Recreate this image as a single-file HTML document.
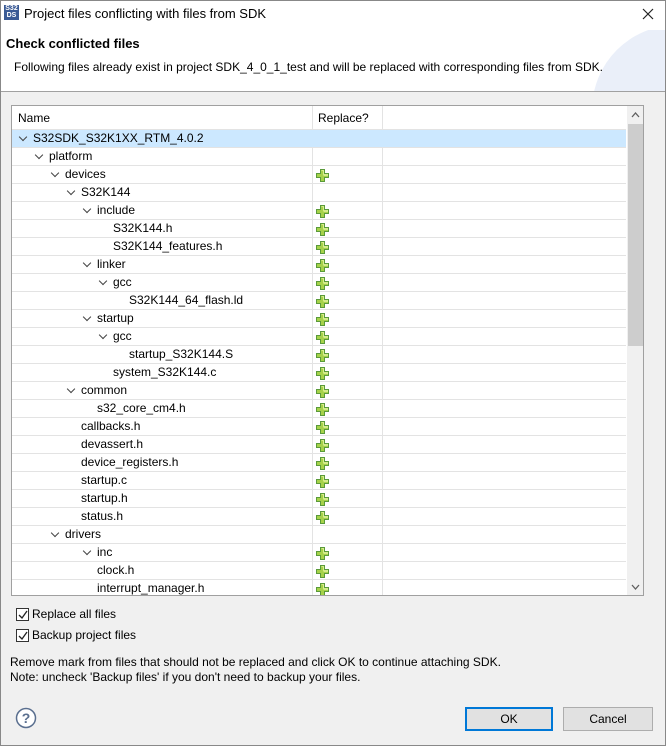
<!DOCTYPE html>
<html><head><style>
*{margin:0;padding:0;box-sizing:border-box}
body{width:666px;height:746px;background:#f0f0f0;font-family:"Liberation Sans",sans-serif;font-size:12px;color:#000;position:relative;overflow:hidden}
.abs{position:absolute}
#frame{left:0;top:0;width:666px;height:746px;border:1px solid #888;pointer-events:none;z-index:9}
#title{left:0;top:0;width:666px;height:30px;background:#fff}
#hdr{left:0;top:30px;width:666px;height:62px;background:#fff;border-bottom:1px solid #a0a0a0;overflow:hidden}
#tbl{left:11px;top:105px;width:633px;height:491px;background:#fff;border:1px solid #a0a0a0;overflow:hidden}
.row{position:absolute;left:0;width:614px;height:18px;border-bottom:1px solid #e3e3e3;line-height:17px;white-space:nowrap}
.vl{position:absolute;top:0;width:1px;height:491px;background:#e3e3e3}
.arr{position:absolute;top:4px;width:6px;height:6px;border-right:1.3px solid #444;border-bottom:1.3px solid #444;transform:rotate(45deg)}
.plus{position:absolute;left:304px;top:3px}
.cb{position:absolute;width:13px;height:13px;border:1px solid #333;background:#fff}
.btn{position:absolute;height:24px;background:#e1e1e1;border:1px solid #adadad;text-align:center;line-height:22px}
</style></head><body>
<div id="title" class="abs">
<div class="abs" style="left:4px;top:5px;width:15px;height:15px;background:#3a5a95;color:#fff;font-size:7px;line-height:7px;text-align:center;font-weight:bold">S32<br>DS</div>
<div class="abs" style="left:24px;top:6px;font-size:13px">Project files conflicting with files from SDK</div>
<svg class="abs" style="left:642px;top:8px" width="12" height="12"><path d="M1 1L11 11M11 1L1 11" stroke="#222" stroke-width="1.2"/></svg>
</div>
<div id="hdr" class="abs">
<div class="abs" style="left:592px;top:-5px;width:170px;height:170px;border-radius:50%;background:#eaeff9"></div>
<div class="abs" style="left:6px;top:6px;font-weight:bold;font-size:13px">Check conflicted files</div>
<div class="abs" style="left:14px;top:30px">Following files already exist in project SDK_4_0_1_test and will be replaced with corresponding files from SDK.</div>
</div>
<div id="tbl" class="abs">
<div class="abs" style="left:0;top:0;width:614px;height:24px;border-bottom:1px solid #e3e3e3"></div>
<div class="abs" style="left:6px;top:5px">Name</div>
<div class="abs" style="left:306px;top:5px">Replace?</div>
<div class="vl" style="left:300px"></div><div class="vl" style="left:370px"></div>
<div id="rows"></div>
<div class="abs" style="left:615px;top:0;width:17px;height:491px;background:#f0f0f0"></div>
<div class="abs" style="left:616px;top:18px;width:15px;height:222px;background:#cdcdcd"></div>
<svg class="abs" style="left:619px;top:6px" width="9" height="6"><path d="M1 5L4.5 1L8 5" stroke="#606060" fill="none" stroke-width="1.3"/></svg>
<svg class="abs" style="left:619px;top:478px" width="9" height="6"><path d="M1 1L4.5 5L8 1" stroke="#606060" fill="none" stroke-width="1.3"/></svg>
</div>
<div class="cb" style="left:16px;top:608px"></div>
<svg class="abs" style="left:17px;top:609px" width="12" height="12"><path d="M2 6L5 9L10 2" stroke="#222" fill="none" stroke-width="1.3"/></svg>
<div class="abs" style="left:32px;top:607px">Replace all files</div>
<div class="cb" style="left:16px;top:629px"></div>
<svg class="abs" style="left:17px;top:630px" width="12" height="12"><path d="M2 6L5 9L10 2" stroke="#222" fill="none" stroke-width="1.3"/></svg>
<div class="abs" style="left:32px;top:628px">Backup project files</div>
<div class="abs" style="left:10px;top:655px">Remove mark from files that should not be replaced and click OK to continue attaching SDK.</div>
<div class="abs" style="left:10px;top:670px">Note: uncheck 'Backup files' if you don't need to backup your files.</div>
<svg class="abs" style="left:15px;top:707px" width="22" height="22"><circle cx="11" cy="11" r="9.5" fill="#fff" stroke="#5a6f8f" stroke-width="1.5"/><text x="11" y="16" font-size="14" font-weight="bold" text-anchor="middle" fill="#5a6f8f" font-family="Liberation Sans">?</text></svg>
<div class="btn" style="left:465px;top:707px;width:88px;border:2px solid #0078d7;line-height:20px">OK</div>
<div class="btn" style="left:563px;top:707px;width:90px">Cancel</div>
<div id="frame" class="abs"></div>
<script>
var r=[[0,'S32SDK_S32K1XX_RTM_4.0.2',1,0],[1,'platform',1,0],[2,'devices',1,1],[3,'S32K144',1,0],[4,'include',1,1],[6,'S32K144.h',0,1],[6,'S32K144_features.h',0,1],[4,'linker',1,1],[5,'gcc',1,1],[7,'S32K144_64_flash.ld',0,1],[4,'startup',1,1],[5,'gcc',1,1],[7,'startup_S32K144.S',0,1],[6,'system_S32K144.c',0,1],[3,'common',1,1],[5,'s32_core_cm4.h',0,1],[4,'callbacks.h',0,1],[4,'devassert.h',0,1],[4,'device_registers.h',0,1],[4,'startup.c',0,1],[4,'startup.h',0,1],[4,'status.h',0,1],[2,'drivers',1,0],[4,'inc',1,1],[5,'clock.h',0,1],[5,'interrupt_manager.h',0,1]];
var h='';var P='<svg class="plus" width="13" height="13"><path d="M4.5 0.5h4v4h4v4h-4v4h-4v-4h-4v-4h4z" fill="#a6d24a" stroke="#5a9a3a"/><path d="M5.5 1.5h2v4h4v1h-4" fill="none" stroke="#e4f5a0" stroke-width="0.8"/></svg>';
r.forEach(function(e,i){var l=e[0];
h+='<div class="row" style="top:'+(24+i*18)+'px;'+(i==0?'background:#cce8ff;':'')+'">'+(e[2]?'<div class="arr" style="left:'+(8+l*16)+'px"></div>':'')+'<span style="position:absolute;left:'+(e[2]?21+l*16:5+l*16)+'px">'+e[1]+'</span>'+(e[3]?P:'')+'</div>';});
document.getElementById('rows').innerHTML=h;
</script>
</body></html>
